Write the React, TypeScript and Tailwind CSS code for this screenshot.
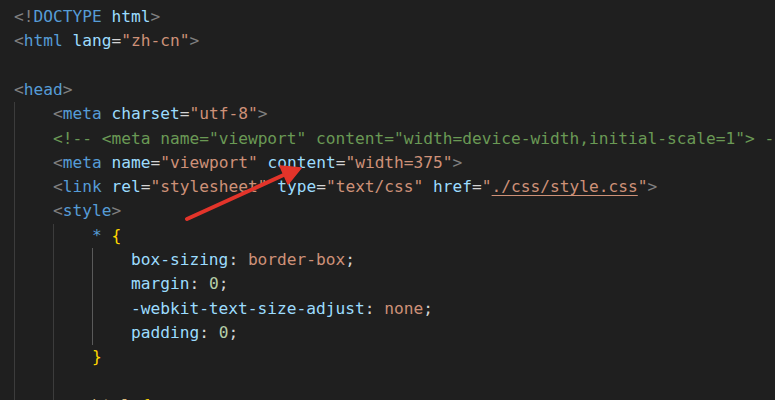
import React from "react";

type Tok = [string, string];

const P = "text-[#808080]";
const TAG = "text-[#569cd6]";
const ATTR = "text-[#9cdcfe]";
const EQ = "text-[#d4d4d4]";
const STR = "text-[#ce9178]";
const COM = "text-[#6a9955]";
const NUM = "text-[#b5cea8]";
const BR = "text-[#ffd700]";
const SEL = "text-[#d7ba7d]";

const lines: { indent: number; toks: Tok[] }[] = [
  { indent: 0, toks: [[P, "<!"], [TAG, "DOCTYPE"], [EQ, " "], [ATTR, "html"], [P, ">"]] },
  { indent: 0, toks: [[P, "<"], [TAG, "html"], [EQ, " "], [ATTR, "lang"], [EQ, "="], [STR, '"zh-cn"'], [P, ">"]] },
  { indent: -1, toks: [] },
  { indent: 0, toks: [[P, "<"], [TAG, "head"], [P, ">"]] },
  { indent: 1, toks: [[P, "<"], [TAG, "meta"], [EQ, " "], [ATTR, "charset"], [EQ, "="], [STR, '"utf-8"'], [P, ">"]] },
  { indent: 1, toks: [[COM, '<!-- <meta name="viewport" content="width=device-width,initial-scale=1"> -->']] },
  {
    indent: 1,
    toks: [
      [P, "<"], [TAG, "meta"], [EQ, " "], [ATTR, "name"], [EQ, "="], [STR, '"viewport"'], [EQ, " "],
      [ATTR, "content"], [EQ, "="], [STR, '"width=375"'], [P, ">"],
    ],
  },
  {
    indent: 1,
    toks: [
      [P, "<"], [TAG, "link"], [EQ, " "], [ATTR, "rel"], [EQ, "="], [STR, '"stylesheet"'], [EQ, " "],
      [ATTR, "type"], [EQ, "="], [STR, '"text/css"'], [EQ, " "], [ATTR, "href"], [EQ, "="],
      [STR, '"'], [STR + " underline underline-offset-[3px]", "./css/style.css"], [STR, '"'], [P, ">"],
    ],
  },
  { indent: 1, toks: [[P, "<"], [TAG, "style"], [P, ">"]] },
  { indent: 2, toks: [[TAG, "*"], [EQ, " "], [BR, "{"]] },
  { indent: 3, toks: [[ATTR, "box-sizing"], [EQ, ": "], [STR, "border-box"], [EQ, ";"]] },
  { indent: 3, toks: [[ATTR, "margin"], [EQ, ": "], [NUM, "0"], [EQ, ";"]] },
  { indent: 3, toks: [[ATTR, "-webkit-text-size-adjust"], [EQ, ": "], [STR, "none"], [EQ, ";"]] },
  { indent: 3, toks: [[ATTR, "padding"], [EQ, ": "], [NUM, "0"], [EQ, ";"]] },
  { indent: 2, toks: [[BR, "}"]] },
  { indent: 2, toks: [] },
  { indent: 2, toks: [[SEL, "html"], [EQ, " "], [BR, "{"]] },
];

function Line({ indent, toks, active }: { indent: number; toks: Tok[]; active: boolean }) {
  const guides = Math.max(indent, 0);
  return (
    <div className="flex h-[24.3px] items-center whitespace-pre">
      {Array.from({ length: guides }).map((_, i) => (
        <span
          key={i}
          className={
            active && i === 2
              ? "inline-block h-full w-[4ch] shrink-0 border-l border-[#5a5a5a]"
              : "inline-block h-full w-[4ch] shrink-0 border-l border-[#3c3c3c]"
          }
        />
      ))}
      {toks.map(([c, t], i) => (
        <span key={i} className={c + " shrink-0"}>
          {t}
        </span>
      ))}
    </div>
  );
}

export default function App() {
  return (
    <div className="relative h-[400px] w-[775px] overflow-hidden bg-[#1f1f1f] pl-[14px] pt-[5px] font-['DejaVu_Sans_Mono','Liberation_Mono',monospace] text-[16.2px] leading-none text-[#d4d4d4]">
      {lines.map((l, i) => (
        <Line key={i} indent={l.indent} toks={l.toks} active={i >= 10 && i <= 13} />
      ))}
      <svg className="absolute left-0 top-0" width="775" height="400" viewBox="0 0 775 400">
        <line x1="187" y1="219" x2="288" y2="173" stroke="#e3342a" strokeWidth="4" strokeLinecap="round" />
        <polygon points="301,168 280,166 288,184" fill="#e3342a" stroke="#e3342a" strokeWidth="1.5" strokeLinejoin="round" />
      </svg>
    </div>
  );
}
